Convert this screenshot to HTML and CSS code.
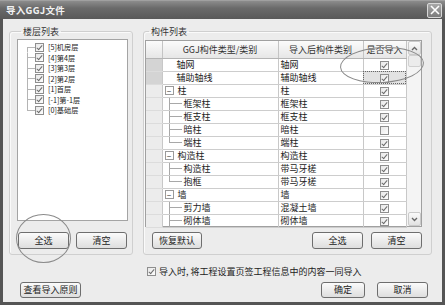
FILE: index.html
```html
<!DOCTYPE html>
<html lang="zh-CN">
<head>
    <meta charset="UTF-8">
    <title>导入GGJ文件</title>
    <link rel="stylesheet" href="styles.css">
</head>
<body>

<div class="dialog">
    <div class="titlebar">
        <span class="title">导入GGJ文件</span>
        <span class="close">
            <svg width="10" height="10" viewBox="0 0 10 10"><path d="M1 1L9 9M9 1L1 9" stroke="#fff" stroke-width="1.6"/></svg>
        </span>
    </div>

    <div class="body">
        <div class="groups">
            <fieldset class="group floors">
                <legend>楼层列表</legend>
                <ul class="floor-list">
                    <li class="first"><span class="line"></span><span class="cb on"></span>[5]机房层</li>
                    <li><span class="line"></span><span class="cb on"></span>[4]第4层</li>
                    <li><span class="line"></span><span class="cb on"></span>[3]第3层</li>
                    <li><span class="line"></span><span class="cb on"></span>[2]第2层</li>
                    <li><span class="line"></span><span class="cb on"></span>[1]首层</li>
                    <li><span class="line"></span><span class="cb on"></span>[-1]第-1层</li>
                    <li class="last"><span class="line"></span><span class="cb on"></span>[0]基础层</li>
                </ul>
                <div class="btn-row">
                    <button class="btn">全选</button>
                    <button class="btn">清空</button>
                </div>
            </fieldset>

            <fieldset class="group parts">
                <legend>构件列表</legend>
                <div class="grid">
                    <table class="parts-table">
                        <colgroup>
                            <col class="c-head"><col class="c-type"><col class="c-new"><col class="c-imp">
                        </colgroup>
                        <thead>
                            <tr><th></th><th>GGJ构件类型/类别</th><th>导入后构件类别</th><th>是否导入</th></tr>
                        </thead>
                        <tbody>
                            <tr class="sel"><td></td><td><div class="node top">轴网</div></td><td>轴网</td><td><span class="cb on"></span></td></tr>
                            <tr class="sel"><td></td><td><div class="node top">辅助轴线</div></td><td>辅助轴线</td><td class="focus"><span class="cb on"></span></td></tr>
                            <tr><td></td><td><div class="node"><span class="toggle">−</span>柱</div></td><td>柱</td><td><span class="cb on"></span></td></tr>
                            <tr><td></td><td><div class="node"><span class="branch"></span>框架柱</div></td><td>框架柱</td><td><span class="cb on"></span></td></tr>
                            <tr><td></td><td><div class="node"><span class="branch"></span>框支柱</div></td><td>框支柱</td><td><span class="cb on"></span></td></tr>
                            <tr><td></td><td><div class="node"><span class="branch"></span>暗柱</div></td><td>暗柱</td><td><span class="cb"></span></td></tr>
                            <tr><td></td><td><div class="node"><span class="branch last"></span>端柱</div></td><td>端柱</td><td><span class="cb on"></span></td></tr>
                            <tr><td></td><td><div class="node"><span class="toggle">−</span>构造柱</div></td><td>构造柱</td><td><span class="cb on"></span></td></tr>
                            <tr><td></td><td><div class="node"><span class="branch"></span>构造柱</div></td><td>带马牙槎</td><td><span class="cb on"></span></td></tr>
                            <tr><td></td><td><div class="node"><span class="branch last"></span>抱框</div></td><td>带马牙槎</td><td><span class="cb on"></span></td></tr>
                            <tr><td></td><td><div class="node"><span class="toggle">−</span>墙</div></td><td>墙</td><td><span class="cb on"></span></td></tr>
                            <tr><td></td><td><div class="node"><span class="branch"></span>剪力墙</div></td><td>混凝土墙</td><td><span class="cb on"></span></td></tr>
                            <tr><td></td><td><div class="node"><span class="branch"></span>砌体墙</div></td><td>砌体墙</td><td><span class="cb on"></span></td></tr>
                        </tbody>
                    </table>
                    <div class="vscroll">
                        <span class="sb-btn">
                            <svg width="7" height="5" viewBox="0 0 7 5"><path d="M1 4L3.5 1.5L6 4" fill="none" stroke="#666" stroke-width="1.3"/></svg>
                        </span>
                        <span class="sb-thumb"></span>
                        <span class="sb-track"></span>
                        <span class="sb-btn">
                            <svg width="7" height="5" viewBox="0 0 7 5"><path d="M1 1L3.5 3.5L6 1" fill="none" stroke="#666" stroke-width="1.3"/></svg>
                        </span>
                    </div>
                </div>
                <div class="btn-row">
                    <button class="btn wide">恢复默认</button>
                    <span class="spacer"></span>
                    <button class="btn">全选</button>
                    <button class="btn">清空</button>
                </div>
            </fieldset>
        </div>

        <label class="sync"><span class="cb on"></span>导入时, 将工程设置页签工程信息中的内容一同导入</label>

        <div class="footer">
            <button class="btn rules">查看导入原则</button>
            <span class="spacer"></span>
            <button class="btn ok">确定</button>
            <button class="btn cancel">取消</button>
        </div>
    </div>

    <span class="mark mark-all"></span>
    <span class="mark mark-import"></span>
</div>

</body>
</html>
```

FILE: styles.css
```css
* {
    box-sizing: border-box;
}

body {
    margin: 0;
    font-family: "Noto Sans CJK SC", "DejaVu Sans", sans-serif;
    font-size: 9px;
    color: #222;
    background: #fff;
}

.dialog {
    position: relative;
    width: 445px;
    height: 305px;
    display: flex;
    flex-direction: column;
}

.titlebar {
    height: 19px;
    display: flex;
    align-items: center;
    justify-content: space-between;
    padding: 0 3px 0 6px;
    background: linear-gradient(#8c8c8c, #6a6a6a 40%, #595959);
    border-top: 1px solid #a0a0a0;
}

.title {
    color: #f2f2f2;
    font-size: 9.5px;
    font-weight: bold;
    letter-spacing: 0.3px;
}

.close {
    width: 15px;
    height: 15px;
    display: flex;
    align-items: center;
    justify-content: center;
    border: 1px solid #d8d8d8;
    border-radius: 2px;
    background: linear-gradient(#a8a8a8, #7c7c7c);
}

.body {
    flex: 1;
    display: flex;
    flex-direction: column;
    background: #ececec;
    border: 3px solid #555;
    border-top: 0;
    padding: 7px 10px 0 6px;
}

.groups {
    display: flex;
    gap: 10px;
}

.group {
    margin: 0;
    min-width: 0;
    border: 1px solid #cfcfcf;
    border-radius: 3px;
    box-shadow: inset 1px 1px 0 #fafafa;
    display: flex;
    flex-direction: column;
    height: 229px;
}

.group legend {
    padding: 0 2px;
    margin-left: 4px;
    line-height: 11px;
    color: #333;
}

.floors {
    width: 124px;
    padding: 2px 4px 5px 7px;
}

.parts {
    width: 289px;
    padding: 3px 9px 5px 1px;
}

/* floor tree */
.floor-list {
    list-style: none;
    margin: 0;
    padding: 2px 0 0 9px;
    height: 182px;
    background: #fff;
    border: 1px solid #a4a4a4;
}

.floor-list li {
    display: flex;
    align-items: center;
    height: 10.5px;
    font-size: 7.2px;
    line-height: 10.5px;
}

.floor-list .line {
    width: 8px;
    height: 10.5px;
    background:
        linear-gradient(#b4b4b4, #b4b4b4) 0 0 / 1px 100% no-repeat,
        linear-gradient(#b4b4b4, #b4b4b4) 0 50% / 100% 1px no-repeat;
}

.floor-list .first .line {
    background:
        linear-gradient(#b4b4b4, #b4b4b4) 0 100% / 1px 50% no-repeat,
        linear-gradient(#b4b4b4, #b4b4b4) 0 50% / 100% 1px no-repeat;
}

.floor-list .last .line {
    background:
        linear-gradient(#b4b4b4, #b4b4b4) 0 0 / 1px 50% no-repeat,
        linear-gradient(#b4b4b4, #b4b4b4) 0 50% / 100% 1px no-repeat;
}

.floor-list .cb {
    margin-right: 4px;
    flex-shrink: 0;
}

/* checkbox */
.cb {
    display: inline-block;
    position: relative;
    width: 9px;
    height: 9px;
    border: 1px solid #8e8e8e;
    background: linear-gradient(135deg, #e8e8e8, #fdfdfd);
    vertical-align: middle;
}

.cb.on::after {
    content: "";
    position: absolute;
    left: 2px;
    top: 0;
    width: 2px;
    height: 5px;
    border: solid #6c6c6c;
    border-width: 0 1.5px 1.5px 0;
    transform: rotate(40deg);
}

/* buttons */
.btn-row {
    display: flex;
    gap: 7px;
    margin-top: auto;
}

.floors .btn-row {
    padding-left: 1px;
}

.parts .btn-row {
    padding-left: 7px;
    gap: 8px;
}

.spacer {
    flex: 1;
}

.btn {
    height: 17px;
    width: 51px;
    padding: 0;
    border: 1px solid #6e6e6e;
    border-radius: 3px;
    background: linear-gradient(#fbfbfb, #ececec 50%, #dedede);
    font-family: inherit;
    font-size: 9px;
    color: #222;
    line-height: 15px;
}

.btn.wide {
    width: 50px;
}

/* parts grid */
.grid {
    display: flex;
    height: 187px;
    background: #fff;
    border: 1px solid #a0a0a0;
}

.parts-table {
    width: 260px;
    table-layout: fixed;
    border-collapse: collapse;
}

.c-head { width: 16px; }
.c-type { width: 116px; }
.c-new { width: 85px; }
.c-imp { width: 43px; }

.parts-table th {
    height: 17px;
    padding: 0;
    font-weight: normal;
    color: #333;
    background: linear-gradient(#fbfbfb, #e6e6e6);
    border-right: 1px solid #c4c4c4;
    border-bottom: 1px solid #b4b4b4;
}

.parts-table td {
    height: 13px;
    padding: 0 0 0 2px;
    line-height: 12px;
    border-right: 1px solid #c8c8c8;
    border-bottom: 1px solid #cdcdcd;
    white-space: nowrap;
    overflow: hidden;
}

.parts-table td:first-child {
    background: #ececec;
    border-bottom-color: #dcdcdc;
}

.parts-table tr.sel td:first-child {
    background: #d4d4d4;
}

.parts-table td:last-child {
    text-align: center;
    padding: 0;
}

.parts-table td.focus {
    background: #e2e2e2;
    outline: 1px dotted #666;
    outline-offset: -1px;
}

.node {
    display: flex;
    align-items: center;
    height: 12px;
}

.node.top {
    padding-left: 12px;
}

.toggle {
    width: 9px;
    height: 9px;
    margin: 0 4px 0 0;
    border: 1px solid #9a9a9a;
    background: #fff;
    display: flex;
    align-items: center;
    justify-content: center;
    font-size: 8px;
    line-height: 7px;
    color: #333;
}

.branch {
    width: 13px;
    height: 12px;
    margin: 0 2px 0 4px;
    background:
        linear-gradient(#a8a8a8, #a8a8a8) 0 0 / 1px 100% no-repeat,
        linear-gradient(#a8a8a8, #a8a8a8) 0 50% / 100% 1px no-repeat;
}

.branch.last {
    background:
        linear-gradient(#a8a8a8, #a8a8a8) 0 0 / 1px 50% no-repeat,
        linear-gradient(#a8a8a8, #a8a8a8) 0 50% / 100% 1px no-repeat;
}

.vscroll {
    flex: 1;
    display: flex;
    flex-direction: column;
    padding: 0 0 0 1px;
    background: #f4f4f4;
}

.sb-btn {
    height: 14px;
    display: flex;
    align-items: center;
    justify-content: center;
    border: 1px solid #cacaca;
    border-radius: 2px;
    background: linear-gradient(#fafafa, #e2e2e2);
}

.sb-thumb {
    height: 12px;
    border: 1px solid #d0d0d0;
    border-radius: 2px;
    background: #ececec;
}

.sb-track {
    flex: 1;
}

/* bottom */
.sync {
    display: flex;
    align-items: center;
    gap: 3px;
    height: 12px;
    margin-top: 10px;
    padding-left: 138px;
    color: #222;
}

.footer {
    display: flex;
    align-items: center;
    gap: 12px;
    margin-top: 5px;
    padding-left: 11px;
    padding-right: 4px;
}

.btn.rules {
    width: 61px;
    height: 16px;
    line-height: 14px;
}

.btn.ok {
    width: 44px;
    height: 16px;
    line-height: 14px;
}

.btn.cancel {
    width: 51px;
    height: 16px;
    line-height: 14px;
}

/* hand-drawn annotation rings */
.mark {
    position: absolute;
    border: 1px solid #8a8a8a;
    border-radius: 50%;
    pointer-events: none;
}

.mark-all {
    left: 16px;
    top: 214px;
    width: 55px;
    height: 49px;
}

.mark-import {
    left: 340px;
    top: 47px;
    width: 84px;
    height: 36px;
    transform: rotate(-3deg);
}
```
